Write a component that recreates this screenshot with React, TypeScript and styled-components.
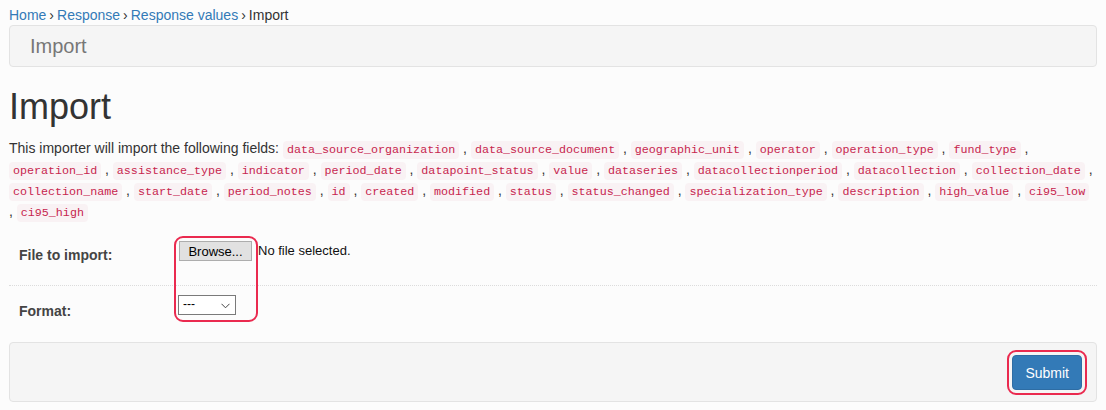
import React from 'react';
import styled, { createGlobalStyle } from 'styled-components';

const FIELDS = [
  'data_source_organization',
  'data_source_document',
  'geographic_unit',
  'operator',
  'operation_type',
  'fund_type',
  'operation_id',
  'assistance_type',
  'indicator',
  'period_date',
  'datapoint_status',
  'value',
  'dataseries',
  'datacollectionperiod',
  'datacollection',
  'collection_date',
  'collection_name',
  'start_date',
  'period_notes',
  'id',
  'created',
  'modified',
  'status',
  'status_changed',
  'specialization_type',
  'description',
  'high_value',
  'ci95_low',
  'ci95_high',
];

const colors = {
  text: '#333333',
  link: '#337ab7',
  muted: '#777777',
  well: '#f5f5f5',
  wellBorder: '#e3e3e3',
  annotation: '#ea2a4f',
};

const GlobalStyle = createGlobalStyle`
  html, body {
    margin: 0;
    padding: 0;
    background: #fcfcfc;
    font-family: "Liberation Sans", Arial, sans-serif;
    font-size: 14px;
    color: ${colors.text};
  }
`;

const Page = styled.div`
  width: 1088px;
  padding: 5px 9px 0 9px;
`;

const Breadcrumb = styled.div`
  line-height: 20px;
  height: 20px;
  white-space: nowrap;
`;

const Crumb = styled.a`
  color: ${colors.link};
  text-decoration: none;
`;

const Sep = styled.span`
  padding: 0 3px;
  color: ${colors.text};
`;

const Well = styled.div`
  background: ${colors.well};
  border: 1px solid ${colors.wellBorder};
  border-radius: 4px;
  box-sizing: border-box;
`;

const TitleWell = styled(Well)`
  height: 42px;
  padding: 0 20px;
  display: flex;
  align-items: center;
  font-size: 20px;
  color: ${colors.muted};
`;

const Heading = styled.h1`
  margin: 20px 0 11px 0;
  font-size: 36px;
  font-weight: 400;
  line-height: 40px;
  color: ${colors.text};
`;

const Intro = styled.p`
  margin: 0;
  padding-right: 3px;
  line-height: 21px;
`;

const Code = styled.code`
  font-family: "Liberation Mono", "DejaVu Sans Mono", monospace;
  font-size: 11.7px;
  line-height: 1;
  padding: 2px 4px;
  color: #c7254e;
  background: #f9f2f4;
  border-radius: 4px;
`;

const Form = styled.div`
  position: relative;
  margin-top: 10px;
`;

const Row = styled.div<{ $height: number; $divider?: boolean }>`
  display: grid;
  grid-template-columns: 170px 1fr;
  height: ${(p) => p.$height}px;
  border-bottom: ${(p) => (p.$divider ? '1px dotted #dcdcdc' : 'none')};
`;

const Label = styled.div<{ $offset: number }>`
  padding: ${(p) => p.$offset}px 0 0 10px;
  font-weight: 700;
  line-height: 20px;
  color: #444;
`;

const Controls = styled.div`
  padding-top: 9px;
  display: flex;
  align-items: flex-start;
  gap: 6px;
`;

const BrowseButton = styled.button`
  width: 73px;
  height: 20px;
  padding: 0;
  background: #e1e1e1;
  border: 1px solid #adadad;
  border-radius: 0;
  font-family: "Liberation Sans", Arial, sans-serif;
  font-size: 13px;
  color: #000;
`;

const FileName = styled.span`
  font-size: 13px;
  line-height: 20px;
  color: #111;
`;

const SelectBox = styled.div`
  position: relative;
  width: 58px;
  height: 20px;
  box-sizing: border-box;
  border: 1px solid #7a7a7a;
  background: #fff;
  font-size: 12px;
  line-height: 17px;
  padding-left: 4px;
  color: #000;
  margin-left: -1px;

  svg {
    position: absolute;
    right: 5px;
    top: 7px;
  }
`;

const Annotation = styled.div`
  position: absolute;
  left: 165px;
  top: 4px;
  width: 84px;
  height: 86px;
  box-sizing: border-box;
  border: 2px solid ${colors.annotation};
  border-radius: 9px;
  pointer-events: none;
`;

const FooterWell = styled(Well)`
  margin-top: 6px;
  height: 60px;
  padding: 12px 14px 0 0;
  display: flex;
  justify-content: flex-end;
  align-items: flex-start;
`;

const SubmitButton = styled.button`
  height: 35px;
  padding: 0 12px;
  background: #337ab7;
  border: 1px solid #2e6da4;
  border-radius: 4px;
  color: #fff;
  font-family: "Liberation Sans", Arial, sans-serif;
  font-size: 14px;
  outline: 2px solid ${colors.annotation};
  outline-offset: 3px;
`;

export default function App() {
  return (
    <Page>
      <GlobalStyle />
      <Breadcrumb>
        <Crumb href="#">Home</Crumb>
        <Sep>›</Sep>
        <Crumb href="#">Response</Crumb>
        <Sep>›</Sep>
        <Crumb href="#">Response values</Crumb>
        <Sep>›</Sep>
        Import
      </Breadcrumb>
      <TitleWell>Import</TitleWell>
      <Heading>Import</Heading>
      <Intro>
        This importer will import the following fields:{' '}
        {FIELDS.map((f, i) => (
          <React.Fragment key={f}>
            {i > 0 && ' , '}
            <Code>{f}</Code>
          </React.Fragment>
        ))}
      </Intro>
      <Form>
        <Row $height={53} $divider>
          <Label $offset={13}>File to import:</Label>
          <Controls>
            <BrowseButton type="button">Browse...</BrowseButton>
            <FileName>No file selected.</FileName>
          </Controls>
        </Row>
        <Row $height={50}>
          <Label $offset={15}>Format:</Label>
          <Controls>
            <SelectBox>
              ---
              <svg width="9" height="6" viewBox="0 0 9 6">
                <path d="M0.5 0.8 L4.5 4.8 L8.5 0.8" fill="none" stroke="#444" strokeWidth="1" />
              </svg>
            </SelectBox>
          </Controls>
        </Row>
        <Annotation />
      </Form>
      <FooterWell>
        <SubmitButton type="button">Submit</SubmitButton>
      </FooterWell>
    </Page>
  );
}
